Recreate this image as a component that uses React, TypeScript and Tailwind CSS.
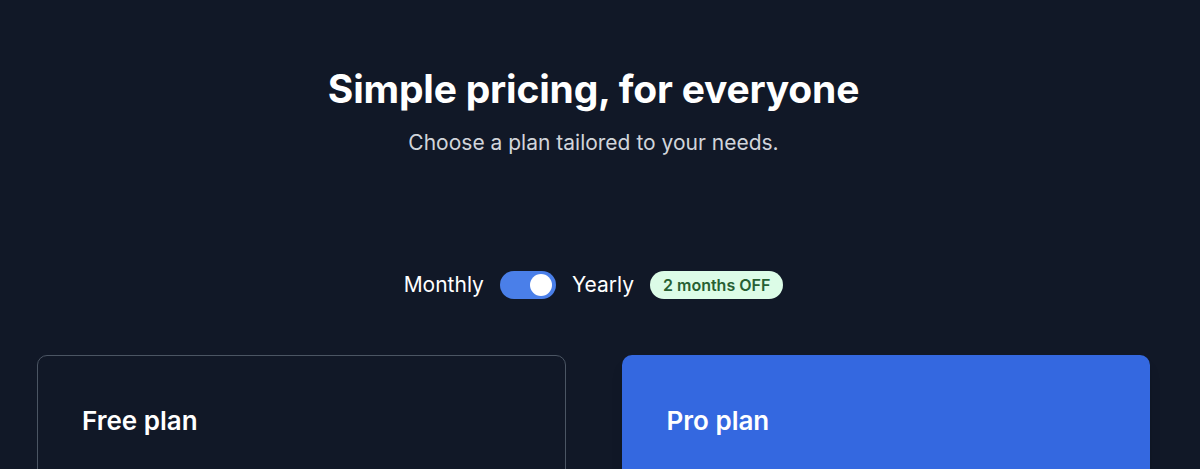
import React from "react";

export default function App() {
  return (
    <div className="min-h-[469px] w-full bg-[#111827] overflow-hidden" style={{ fontFamily: "Inter, 'Noto Sans', sans-serif" }}>
      <div className="w-[1187px] flex flex-col items-center pt-[67px]">
        <h1 className="text-[39px] leading-[44px] font-bold text-white tracking-[-0.2px]">Simple pricing, for everyone</h1>
        <p className="mt-[18px] text-[21px] leading-[28px] text-[#d1d5db]">Choose a plan tailored to your needs.</p>
        <div className="mt-[114px] flex items-center gap-4">
          <span className="text-[21px] leading-[28px] text-white">Monthly</span>
          <div className="w-14 h-7 rounded-full bg-[#4a7fe9] flex items-center justify-end px-[4px]">
            <div className="w-[22px] h-[22px] rounded-full bg-white" />
          </div>
          <span className="text-[21px] leading-[28px] text-white">Yearly</span>
          <span className="h-7 px-[13px] rounded-full bg-[#dcfce7] text-[#276033] text-[16px] font-semibold flex items-center">2 months OFF</span>
        </div>
        <div className="mt-[56px] w-full px-[37px] grid grid-cols-2 gap-[56px]">
          <div className="h-[200px] rounded-[10px] border border-[#4b5563] px-[44px] pt-[49px]">
            <h2 className="text-[26px] leading-[32px] font-semibold text-white">Free plan</h2>
          </div>
          <div className="h-[200px] rounded-[10px] bg-[#3468e0] px-[45px] pt-[50px] shadow-lg">
            <h2 className="text-[26px] leading-[32px] font-semibold text-white">Pro plan</h2>
          </div>
        </div>
      </div>
    </div>
  );
}
